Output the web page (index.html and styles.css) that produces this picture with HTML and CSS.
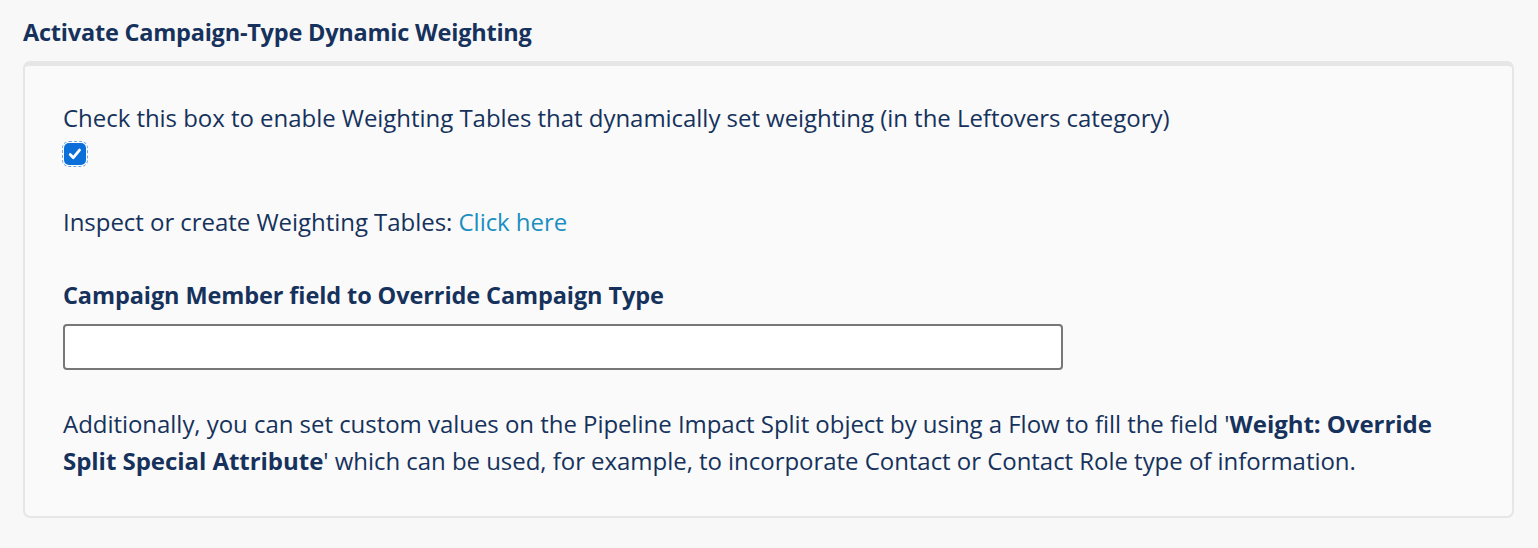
FILE: index.html
```html
<!DOCTYPE html>
<html lang="en">
<head>
  <meta charset="UTF-8">
  <meta name="viewport" content="width=device-width, initial-scale=1.0">
  <title>Campaign-Type Dynamic Weighting</title>
  <link rel="stylesheet" href="styles.css">
</head>
<body>
  <h2 class="section-title">Activate Campaign-Type Dynamic Weighting</h2>

  <div class="card">
    <p class="intro">Check this box to enable Weighting Tables that dynamically set weighting (in the Leftovers category)</p>
    <label class="check">
      <input type="checkbox" checked>
      <span class="box">
        <svg viewBox="0 0 16 16" width="16" height="16"><path d="M3.2 8.6l3.1 3.1 6.2-7.6" fill="none" stroke="#fff" stroke-width="2.8" stroke-linecap="round" stroke-linejoin="round"/></svg>
      </span>
    </label>

    <p class="inspect">Inspect or create Weighting Tables: <a href="#">Click here</a></p>

    <label class="field-label" for="override">Campaign Member field to Override Campaign Type</label>
    <input type="text" id="override" class="text-input">

    <p class="note">Additionally, you can set custom values on the Pipeline Impact Split object by using a Flow to fill the field '<strong>Weight: Override Split Special Attribute</strong>' which can be used, for example, to incorporate Contact or Contact Role type of information.</p>
  </div>
</body>
</html>
```

FILE: styles.css
```css
body { margin: 0; padding: 14px 24px 30px 23px; background: #f8f8f8; font-family: "Open Sans", Lato, sans-serif; color: #16325c; }
.section-title { margin: 0 0 11px 0; font-size: 23.5px; font-weight: 700; line-height: 36px; letter-spacing: -0.22px; }
.card { background: #fafafa; border: 2px solid #e6e6e6; border-top-width: 5px; border-radius: 7px; padding: 33px 38px 37px 38px; }
.card p { margin: 0; font-size: 24px; line-height: 37px; letter-spacing: -0.04px; }
.check { display: inline-block; margin: 7px 0 0 1px; position: relative; cursor: pointer; }
.check input { position: absolute; opacity: 0; margin: 0; }
.check .box { display: flex; align-items: center; justify-content: center; width: 22px; height: 22px; background: #0a6fd8; border-radius: 5px; outline: 1px dashed #6aa6ec; outline-offset: 1px; }
.inspect { margin-top: 36px !important; }
.inspect a { color: #1b8fc0; text-decoration: none; }
.field-label { display: block; margin-top: 37px; font-size: 23.5px; font-weight: 700; line-height: 37px; letter-spacing: -0.1px; }
.text-input { display: block; box-sizing: border-box; width: 1000px; height: 46px; margin-top: 10px; border: 2px solid #777; border-radius: 4px; background: #fff; font-size: 20px; padding: 0 12px; }
.note { margin-top: 35px !important; }
.note strong { font-weight: 700; }
```
